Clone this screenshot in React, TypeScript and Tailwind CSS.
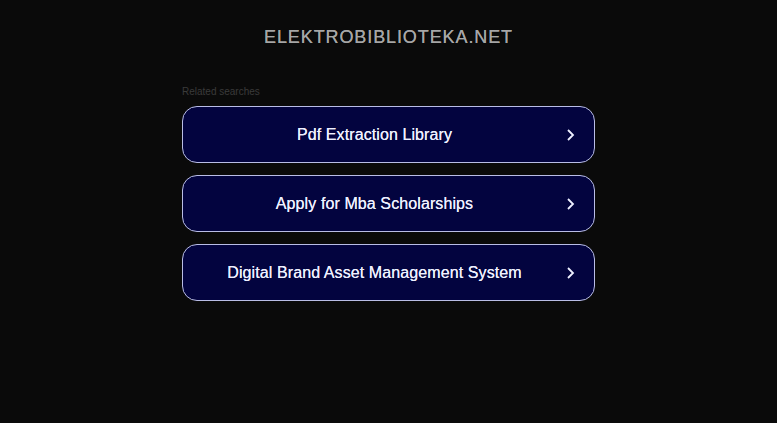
import React from "react";

const items = ["Pdf Extraction Library", "Apply for Mba Scholarships", "Digital Brand Asset Management System"];

export default function App() {
  return (
    <div className="w-[777px] h-[423px] bg-[#0a0a0a] flex flex-col items-center" style={{ fontFamily: "'Liberation Sans', Arial, sans-serif" }}>
      <div className="mt-[26px] text-[18px] leading-[22px] tracking-[0.9px] text-[#a6a6a6] font-medium [text-shadow:0_0_0.4px_#a6a6a6]">ELEKTROBIBLIOTEKA.NET</div>
      <div className="w-[413px] mt-[38px]">
        <div className="text-[10px] leading-[12px] text-[#3a3a3a] mb-[8px]">Related searches</div>
        <div className="flex flex-col gap-[12px]">
          {items.map((t) => (
            <div key={t} className="relative h-[57px] rounded-[15px] border border-[#b9bde6] bg-[#03043f] flex items-center justify-center pr-[28px]">
              <span className="text-[16px] tracking-[0.1px] text-[#eef0ff] [text-shadow:0_0_0.5px_#eef0ff]">{t}</span>
              <svg className="absolute right-[19px] top-1/2 -translate-y-1/2" width="10" height="14" viewBox="0 0 10 14" fill="none">
                <path d="M3 2l5 5-5 5" stroke="#eef0ff" strokeWidth="1.8" />
              </svg>
            </div>
          ))}
        </div>
      </div>
    </div>
  );
}
